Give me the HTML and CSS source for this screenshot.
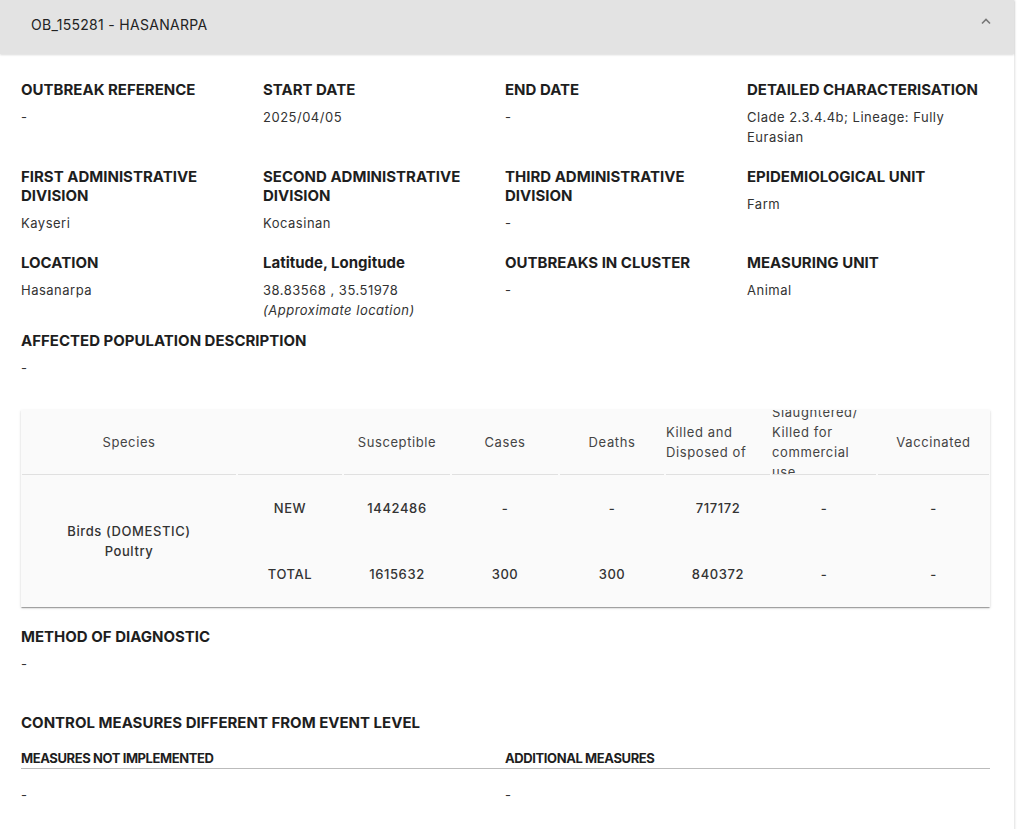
FILE: index.html
```html
<!DOCTYPE html>
<html lang="en">
<head>
    <meta charset="UTF-8">
    <meta name="viewport" content="width=device-width, initial-scale=1.0">
    <title>OB_155281 - HASANARPA</title>
    <link rel="stylesheet" href="styles.css">
</head>
<body>
    <div class="painel">
        <div class="painel-topo">
            <span class="titulo">OB_155281 - HASANARPA</span>
            <svg class="seta" width="12" height="8" viewBox="0 0 12 8">
                <polyline points="2,6.5 6,2.5 10,6.5" fill="none" stroke="#777" stroke-width="1.6"/>
            </svg>
        </div>

        <div class="painel-corpo">
            <div class="campos">
                <div class="campo">
                    <div class="rotulo">OUTBREAK REFERENCE</div>
                    <div class="valor">-</div>
                </div>
                <div class="campo">
                    <div class="rotulo">START DATE</div>
                    <div class="valor">2025/04/05</div>
                </div>
                <div class="campo">
                    <div class="rotulo">END DATE</div>
                    <div class="valor">-</div>
                </div>
                <div class="campo">
                    <div class="rotulo">DETAILED CHARACTERISATION</div>
                    <div class="valor">Clade 2.3.4.4b; Lineage: Fully Eurasian</div>
                </div>

                <div class="campo">
                    <div class="rotulo">FIRST ADMINISTRATIVE DIVISION</div>
                    <div class="valor">Kayseri</div>
                </div>
                <div class="campo">
                    <div class="rotulo">SECOND ADMINISTRATIVE DIVISION</div>
                    <div class="valor">Kocasinan</div>
                </div>
                <div class="campo">
                    <div class="rotulo">THIRD ADMINISTRATIVE DIVISION</div>
                    <div class="valor">-</div>
                </div>
                <div class="campo">
                    <div class="rotulo">EPIDEMIOLOGICAL UNIT</div>
                    <div class="valor">Farm</div>
                </div>

                <div class="campo">
                    <div class="rotulo">LOCATION</div>
                    <div class="valor">Hasanarpa</div>
                </div>
                <div class="campo">
                    <div class="rotulo">Latitude, Longitude</div>
                    <div class="valor">38.83568 , 35.51978<br><em>(Approximate location)</em></div>
                </div>
                <div class="campo">
                    <div class="rotulo">OUTBREAKS IN CLUSTER</div>
                    <div class="valor">-</div>
                </div>
                <div class="campo">
                    <div class="rotulo">MEASURING UNIT</div>
                    <div class="valor">Animal</div>
                </div>
            </div>

            <div class="campo campo-largo">
                <div class="rotulo">AFFECTED POPULATION DESCRIPTION</div>
                <div class="valor">-</div>
            </div>

            <div class="tabela">
                <div class="cab">Species</div>
                <div class="cab"></div>
                <div class="cab">Susceptible</div>
                <div class="cab">Cases</div>
                <div class="cab">Deaths</div>
                <div class="cab cab-texto"><span>Killed and Disposed of</span></div>
                <div class="cab cab-texto"><span>Slaughtered/ Killed for commercial use</span></div>
                <div class="cab">Vaccinated</div>

                <div class="especie">Birds (DOMESTIC)<br>Poultry</div>
                <div class="cel">NEW</div>
                <div class="cel">1442486</div>
                <div class="cel">-</div>
                <div class="cel">-</div>
                <div class="cel">717172</div>
                <div class="cel">-</div>
                <div class="cel">-</div>

                <div class="cel">TOTAL</div>
                <div class="cel">1615632</div>
                <div class="cel">300</div>
                <div class="cel">300</div>
                <div class="cel">840372</div>
                <div class="cel">-</div>
                <div class="cel">-</div>
            </div>

            <div class="campo campo-diag">
                <div class="rotulo">METHOD OF DIAGNOSTIC</div>
                <div class="valor">-</div>
            </div>

            <h2 class="secao">CONTROL MEASURES DIFFERENT FROM EVENT LEVEL</h2>
            <div class="medidas">
                <div class="sub-rotulo">MEASURES NOT IMPLEMENTED</div>
                <div class="sub-rotulo">ADDITIONAL MEASURES</div>
                <div class="valor">-</div>
                <div class="valor">-</div>
            </div>
        </div>
    </div>
</body>
</html>
```

FILE: styles.css
```css
body {
    font-family: 'Inter', 'Liberation Sans', sans-serif;
    background-color: #fff;
    color: #222;
    margin: 0;
}

.painel {
    width: 1014px;
    min-height: 829px;
    box-shadow: 1px 0 2px rgba(0, 0, 0, 0.12);
}

.painel-topo {
    height: 54px;
    background-color: #e3e3e3;
    display: flex;
    align-items: center;
    justify-content: space-between;
    padding: 0 22px 0 31px;
    box-shadow: 0 1px 2px rgba(0, 0, 0, 0.15);
    position: relative;
}

.titulo {
    font-size: 14px;
    color: #222;
    letter-spacing: 0.3px;
    margin-top: -6px;
}

.seta {
    margin-top: -12px;
}

.painel-corpo {
    padding: 26px 24px 40px 21px;
}

.campos {
    display: grid;
    grid-template-columns: repeat(4, 242px);
    row-gap: 20px;
}

.campo {
    padding-right: 10px;
}

.rotulo {
    font-size: 15px;
    font-weight: 700;
    line-height: 19px;
    color: #1e1e1e;
}

.valor {
    font-size: 13px;
    line-height: 20px;
    letter-spacing: 0.5px;
    color: #333;
    margin-top: 8px;
}

.valor em {
    font-style: italic;
}

.campo-largo {
    margin-top: 11px;
}

.tabela {
    margin-top: 32px;
    width: 969px;
    display: grid;
    grid-template-columns: 216px 106px 108px 108px 106px 106px 106px 113px;
    grid-template-rows: 65px 66px 66px;
    background-color: #fafafa;
    box-shadow: 0 2px 1px -1px rgba(0, 0, 0, 0.2), 0 1px 1px rgba(0, 0, 0, 0.14), 0 1px 3px rgba(0, 0, 0, 0.12);
    font-size: 13px;
    letter-spacing: 0.6px;
}

.cab {
    display: flex;
    align-items: center;
    justify-content: center;
    line-height: 20px;
    color: #444;
    border-bottom: 1px solid #e0e0e0;
    margin: 0 1px;
    overflow: hidden;
}

.cab-texto {
    justify-content: flex-start;
    padding-right: 8px;
}

.especie {
    grid-row: 2 / 4;
    display: flex;
    align-items: center;
    justify-content: center;
    text-align: center;
    line-height: 20px;
    color: #333;
    font-weight: 500;
}

.cel {
    display: flex;
    align-items: center;
    justify-content: center;
    color: #333;
    font-weight: 500;
}

.campo-diag {
    margin-top: 20px;
}

.secao {
    font-size: 15px;
    font-weight: 700;
    line-height: 19px;
    color: #1e1e1e;
    margin: 39px 0 0;
}

.medidas {
    width: 969px;
    margin-top: 18px;
    display: grid;
    grid-template-columns: 484px 485px;
}

.sub-rotulo {
    font-size: 13px;
    font-weight: 700;
    letter-spacing: -0.4px;
    line-height: 16px;
    padding-bottom: 2px;
    border-bottom: 1px solid #bbb;
    color: #1e1e1e;
}

.medidas .valor {
    margin-top: 16px;
}
```
